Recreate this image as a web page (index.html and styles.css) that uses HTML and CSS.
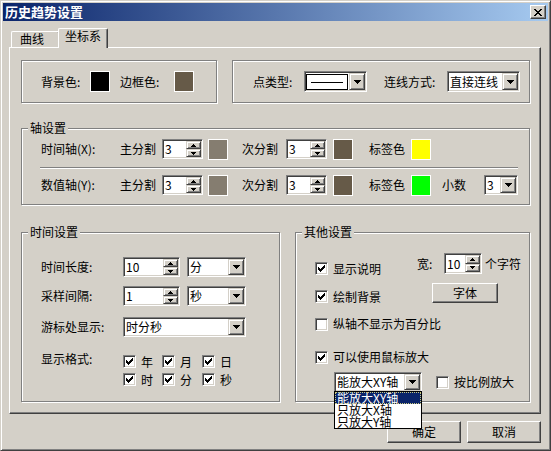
FILE: index.html
```html
<!DOCTYPE html>
<html lang="zh-CN">
<head>
<meta charset="utf-8">
<title>历史趋势设置</title>
<link rel="stylesheet" href="styles.css">
</head>
<body>
<div class="window">
  <div class="titlebar">
    <span class="title">历史趋势设置</span>
    <span class="close-btn"><svg width="8" height="7" viewBox="0 0 8 7" shape-rendering="crispEdges"><path d="M0 0h2v1H0zM6 0h2v1H6zM1 1h2v1H1zM5 1h2v1H5zM2 2h4v1H2zM3 3h2v1H3zM2 4h4v1H2zM1 5h2v1H1zM5 5h2v1H5zM0 6h2v1H0zM6 6h2v1H6z" fill="#000"/></svg></span>
  </div>

  <div class="tabs">
    <div class="tab">曲线</div>
    <div class="tab active">坐标系</div>
  </div>

  <div class="panel">
    <div class="top-row">
      <div class="group g-colors">
        <span class="lbl w49">背景色:</span>
        <span class="swatch sw-black"></span>
        <span class="lbl w54 ml10">边框色:</span>
        <span class="swatch sw-brown"></span>
      </div>
      <div class="group g-line">
        <span class="lbl w51">点类型:</span>
        <div class="combo w63">
          <div class="line-sel"><span class="line"></span></div>
          <span class="drop"><svg width="7" height="4" shape-rendering="crispEdges"><path d="M0 0h7v1H0zM1 1h5v1H1zM2 2h3v1H2zM3 3h1v1H3z"/></svg></span>
        </div>
        <span class="lbl w63 ml17">连线方式:</span>
        <div class="combo w73">
          <span class="val">直接连线</span>
          <span class="drop"><svg width="7" height="4" shape-rendering="crispEdges"><path d="M0 0h7v1H0zM1 1h5v1H1zM2 2h3v1H2zM3 3h1v1H3z"/></svg></span>
        </div>
      </div>
    </div>

    <div class="group g-axis">
      <span class="legend">轴设置</span>
      <div class="arow first">
        <span class="lbl w79">时间轴(X):</span>
        <span class="lbl w42">主分割</span>
        <div class="spin w41"><span class="val">3</span><span class="btns"><span><svg width="5" height="3" shape-rendering="crispEdges"><path d="M2 0h1v1H2zM1 1h3v1H1zM0 2h5v1H0z"/></svg></span><span><svg width="5" height="3" shape-rendering="crispEdges"><path d="M0 0h5v1H0zM1 1h3v1H1zM2 2h1v1H2z"/></svg></span></span></div>
        <span class="swatch sw-gray ml5"></span>
        <span class="lbl w44 ml14">次分割</span>
        <div class="spin w41"><span class="val">3</span><span class="btns"><span><svg width="5" height="3" shape-rendering="crispEdges"><path d="M2 0h1v1H2zM1 1h3v1H1zM0 2h5v1H0z"/></svg></span><span><svg width="5" height="3" shape-rendering="crispEdges"><path d="M0 0h5v1H0zM1 1h3v1H1zM2 2h1v1H2z"/></svg></span></span></div>
        <span class="swatch sw-brown ml6"></span>
        <span class="lbl w42 ml16">标签色</span>
        <span class="swatch sw-yellow"></span>
      </div>
      <div class="separator"></div>
      <div class="arow second">
        <span class="lbl w79">数值轴(Y):</span>
        <span class="lbl w42">主分割</span>
        <div class="spin w41"><span class="val">3</span><span class="btns"><span><svg width="5" height="3" shape-rendering="crispEdges"><path d="M2 0h1v1H2zM1 1h3v1H1zM0 2h5v1H0z"/></svg></span><span><svg width="5" height="3" shape-rendering="crispEdges"><path d="M0 0h5v1H0zM1 1h3v1H1zM2 2h1v1H2z"/></svg></span></span></div>
        <span class="swatch sw-gray ml5"></span>
        <span class="lbl w44 ml14">次分割</span>
        <div class="spin w41"><span class="val">3</span><span class="btns"><span><svg width="5" height="3" shape-rendering="crispEdges"><path d="M2 0h1v1H2zM1 1h3v1H1zM0 2h5v1H0z"/></svg></span><span><svg width="5" height="3" shape-rendering="crispEdges"><path d="M0 0h5v1H0zM1 1h3v1H1zM2 2h1v1H2z"/></svg></span></span></div>
        <span class="swatch sw-brown ml6"></span>
        <span class="lbl w42 ml16">标签色</span>
        <span class="swatch sw-green"></span>
        <span class="lbl w42 ml11">小数</span>
        <div class="combo w34 h20">
          <span class="val">3</span>
          <span class="drop"><svg width="7" height="4" shape-rendering="crispEdges"><path d="M0 0h7v1H0zM1 1h5v1H1zM2 2h3v1H2zM3 3h1v1H3z"/></svg></span>
        </div>
      </div>
    </div>

    <div class="bottom-row">
      <div class="group g-time">
        <span class="legend">时间设置</span>
        <div class="trow r1">
          <span class="lbl w82">时间长度:</span>
          <div class="spin w57"><span class="val">10</span><span class="btns"><span><svg width="5" height="3" shape-rendering="crispEdges"><path d="M2 0h1v1H2zM1 1h3v1H1zM0 2h5v1H0z"/></svg></span><span><svg width="5" height="3" shape-rendering="crispEdges"><path d="M0 0h5v1H0zM1 1h3v1H1zM2 2h1v1H2z"/></svg></span></span></div>
          <div class="combo w59 h20 ml7">
            <span class="val">分</span>
            <span class="drop"><svg width="7" height="4" shape-rendering="crispEdges"><path d="M0 0h7v1H0zM1 1h5v1H1zM2 2h3v1H2zM3 3h1v1H3z"/></svg></span>
          </div>
        </div>
        <div class="trow r2">
          <span class="lbl w82">采样间隔:</span>
          <div class="spin w57"><span class="val">1</span><span class="btns"><span><svg width="5" height="3" shape-rendering="crispEdges"><path d="M2 0h1v1H2zM1 1h3v1H1zM0 2h5v1H0z"/></svg></span><span><svg width="5" height="3" shape-rendering="crispEdges"><path d="M0 0h5v1H0zM1 1h3v1H1zM2 2h1v1H2z"/></svg></span></span></div>
          <div class="combo w59 h20 ml7">
            <span class="val">秒</span>
            <span class="drop"><svg width="7" height="4" shape-rendering="crispEdges"><path d="M0 0h7v1H0zM1 1h5v1H1zM2 2h3v1H2zM3 3h1v1H3z"/></svg></span>
          </div>
        </div>
        <div class="trow r3">
          <span class="lbl w82">游标处显示:</span>
          <div class="combo w123 h20">
            <span class="val">时分秒</span>
            <span class="drop"><svg width="7" height="4" shape-rendering="crispEdges"><path d="M0 0h7v1H0zM1 1h5v1H1zM2 2h3v1H2zM3 3h1v1H3z"/></svg></span>
          </div>
        </div>
        <div class="trow r4">
          <span class="lbl w82 fmt-lbl">显示格式:</span>
          <div class="fmt-grid">
            <label class="check"><span class="cb"><svg width="7" height="7" shape-rendering="crispEdges"><path d="M0 2h1v3H0zM1 3h1v3H1zM2 4h1v3H2zM3 3h1v3H3zM4 2h1v3H4zM5 1h1v3H5zM6 0h1v3H6z"/></svg></span>年</label>
            <label class="check"><span class="cb"><svg width="7" height="7" shape-rendering="crispEdges"><path d="M0 2h1v3H0zM1 3h1v3H1zM2 4h1v3H2zM3 3h1v3H3zM4 2h1v3H4zM5 1h1v3H5zM6 0h1v3H6z"/></svg></span>月</label>
            <label class="check"><span class="cb"><svg width="7" height="7" shape-rendering="crispEdges"><path d="M0 2h1v3H0zM1 3h1v3H1zM2 4h1v3H2zM3 3h1v3H3zM4 2h1v3H4zM5 1h1v3H5zM6 0h1v3H6z"/></svg></span>日</label>
            <label class="check"><span class="cb"><svg width="7" height="7" shape-rendering="crispEdges"><path d="M0 2h1v3H0zM1 3h1v3H1zM2 4h1v3H2zM3 3h1v3H3zM4 2h1v3H4zM5 1h1v3H5zM6 0h1v3H6z"/></svg></span>时</label>
            <label class="check"><span class="cb"><svg width="7" height="7" shape-rendering="crispEdges"><path d="M0 2h1v3H0zM1 3h1v3H1zM2 4h1v3H2zM3 3h1v3H3zM4 2h1v3H4zM5 1h1v3H5zM6 0h1v3H6z"/></svg></span>分</label>
            <label class="check"><span class="cb"><svg width="7" height="7" shape-rendering="crispEdges"><path d="M0 2h1v3H0zM1 3h1v3H1zM2 4h1v3H2zM3 3h1v3H3zM4 2h1v3H4zM5 1h1v3H5zM6 0h1v3H6z"/></svg></span>秒</label>
          </div>
        </div>
      </div>

      <div class="group g-other">
        <span class="legend">其他设置</span>
        <div class="orow o1">
          <label class="check w102 shift5"><span class="cb"><svg width="7" height="7" shape-rendering="crispEdges"><path d="M0 2h1v3H0zM1 3h1v3H1zM2 4h1v3H2zM3 3h1v3H3zM4 2h1v3H4zM5 1h1v3H5zM6 0h1v3H6z"/></svg></span>显示说明</label>
          <span class="lbl w27">宽:</span>
          <div class="spin w38 h21"><span class="val">10</span><span class="btns"><span><svg width="5" height="3" shape-rendering="crispEdges"><path d="M2 0h1v1H2zM1 1h3v1H1zM0 2h5v1H0z"/></svg></span><span><svg width="5" height="3" shape-rendering="crispEdges"><path d="M0 0h5v1H0zM1 1h3v1H1zM2 2h1v1H2z"/></svg></span></span></div>
          <span class="lbl ml3">个字符</span>
        </div>
        <div class="orow o2">
          <label class="check w117 shift3"><span class="cb"><svg width="7" height="7" shape-rendering="crispEdges"><path d="M0 2h1v3H0zM1 3h1v3H1zM2 4h1v3H2zM3 3h1v3H3zM4 2h1v3H4zM5 1h1v3H5zM6 0h1v3H6z"/></svg></span>绘制背景</label>
          <span class="btn font-btn">字体</span>
        </div>
        <div class="orow o3">
          <label class="check"><span class="cb"></span>纵轴不显示为百分比</label>
        </div>
        <div class="orow o4">
          <label class="check"><span class="cb"><svg width="7" height="7" shape-rendering="crispEdges"><path d="M0 2h1v3H0zM1 3h1v3H1zM2 4h1v3H2zM3 3h1v3H3zM4 2h1v3H4zM5 1h1v3H5zM6 0h1v3H6z"/></svg></span>可以使用鼠标放大</label>
        </div>
        <div class="orow o5">
          <div class="combo w88 h20 ml19">
            <span class="val">能放大XY轴</span>
            <span class="drop"><svg width="7" height="4" shape-rendering="crispEdges"><path d="M0 0h7v1H0zM1 1h5v1H1zM2 2h3v1H2zM3 3h1v1H3z"/></svg></span>
          </div>
          <label class="check ml14"><span class="cb"></span>按比例放大</label>
        </div>
      </div>
    </div>
  </div>

  <div class="buttons">
    <span class="btn dlg-btn">确定</span>
    <span class="btn dlg-btn">取消</span>
  </div>

  <div class="dropdown">
    <div class="opt sel">能放大XY轴</div>
    <div class="opt">只放大X轴</div>
    <div class="opt">只放大Y轴</div>
  </div>
</div>
</body>
</html>
```

FILE: styles.css
```css
* { box-sizing: border-box; }
html, body { margin: 0; padding: 0; }
body {
  width: 551px;
  height: 451px;
  overflow: hidden;
  background: #d4d0c8;
  color: #000;
  font-family: "Noto Sans CJK SC", "Liberation Sans", sans-serif;
  font-size: 12px;
  line-height: 14px;
}

.window {
  position: relative;
  width: 551px;
  height: 451px;
  background: #d4d0c8;
  border: 1px solid;
  border-color: #d4d0c8 #404040 #404040 #d4d0c8;
  box-shadow: inset 1px 1px 0 #fff, inset -1px -1px 0 #808080;
  padding: 2px;
  display: flex;
  flex-direction: column;
}

/* title bar */
.titlebar {
  height: 18px;
  flex-shrink: 0;
  background: linear-gradient(to right, #0a246a, #a6caf0);
  display: flex;
  align-items: center;
  justify-content: space-between;
  padding: 0 2px 0 2px;
}
.title {
  color: #fff;
  font-weight: bold;
  font-size: 13px;
  letter-spacing: 0;
}
.close-btn {
  width: 16px;
  height: 14px;
  background: #d4d0c8;
  border: 1px solid;
  border-color: #fff #404040 #404040 #fff;
  box-shadow: inset -1px -1px 0 #808080;
  display: flex;
  align-items: center;
  justify-content: center;
}

/* tabs */
.tabs {
  margin-top: 7px;
  height: 19px;
  flex-shrink: 0;
  display: flex;
  align-items: flex-end;
  padding-left: 8px;
}
.tab {
  height: 16px;
  width: 49px;
  border: 1px solid;
  border-bottom: none;
  border-color: #fff #404040 #fff #fff;
  border-radius: 2px 2px 0 0;
  box-shadow: inset -1px 0 0 #808080;
  padding-left: 8px;
  background: #d4d0c8;
}
.tab.active {
  position: relative;
  z-index: 1;
  width: 50px;
  height: 20px;
  margin-left: -2px;
  margin-bottom: -1px;
  padding-left: 6px;
}

/* panel */
.panel {
  margin-left: 6px;
  width: 532px;
  height: 367px;
  flex-shrink: 0;
  border: 1px solid;
  border-color: #fff #404040 #404040 #fff;
  box-shadow: inset -1px -1px 0 #808080;
  padding: 12px 10px 0 11px;
}

.group {
  position: relative;
  border: 1px solid #808080;
  box-shadow: inset 1px 1px 0 #fff, 1px 1px 0 #fff;
}
.legend {
  position: absolute;
  left: 6px;
  top: -8px;
  padding: 0 2px;
  background: #d4d0c8;
  line-height: 14px;
}

.top-row {
  display: flex;
  gap: 15px;
}
.g-colors {
  width: 196px;
  height: 43px;
  display: flex;
  align-items: center;
  padding-left: 19px;
}
.g-line {
  flex: 1;
  height: 43px;
  display: flex;
  align-items: center;
  padding-left: 20px;
}

.g-axis {
  margin-top: 25px;
  height: 77px;
  padding-left: 19px;
}
.arow {
  display: flex;
  align-items: center;
  height: 20px;
}
.arow.first { margin-top: 10px; }
.arow.second { margin-top: 6px; }
.separator {
  margin-top: 8px;
  margin-left: -1px;
  width: 478px;
  height: 2px;
  border-top: 1px solid #808080;
  border-bottom: 1px solid #fff;
}

.bottom-row {
  margin-top: 27px;
  display: flex;
  gap: 15px;
}
.g-time {
  width: 259px;
  height: 170px;
  padding-left: 19px;
}
.g-other {
  width: 235px;
  height: 170px;
  padding-left: 19px;
}
.trow {
  display: flex;
  align-items: center;
  height: 20px;
}
.trow.r1 { margin-top: 24px; }
.trow.r2 { margin-top: 9px; }
.trow.r3 { margin-top: 11px; }
.trow.r4 { margin-top: 18px; align-items: flex-start; height: auto; }
.fmt-lbl { margin-top: -3px; }
.fmt-grid {
  display: grid;
  grid-template-columns: 39px 40px auto;
  row-gap: 5px;
}
.fmt-grid .check { line-height: 13px; height: 13px; }

.orow {
  display: flex;
  align-items: center;
}
.orow.o1 { margin-top: 20px; height: 21px; }
.orow.o2 { margin-top: 9px; height: 20px; }
.orow.o3 { margin-top: 14px; height: 14px; }
.orow.o4 { margin-top: 19px; height: 14px; }
.orow.o5 { margin-top: 8px; height: 20px; }
.shift5 { margin-top: 10px; }
.shift3 { margin-top: 7px; }

/* generic label widths */
.lbl { white-space: nowrap; flex-shrink: 0; }
.w27 { width: 27px; }
.w34 { width: 34px; }
.w38 { width: 38px; }
.w41 { width: 41px; }
.w42 { width: 42px; }
.w44 { width: 44px; }
.w49 { width: 49px; }
.w51 { width: 51px; }
.w54 { width: 54px; }
.w57 { width: 57px; }
.w59 { width: 59px; }
.w63 { width: 63px; }
.w73 { width: 73px; }
.w79 { width: 79px; }
.w82 { width: 82px; }
.w88 { width: 88px; }
.w102 { width: 102px; }
.w117 { width: 117px; }
.w123 { width: 123px; }
.ml3 { margin-left: 3px; }
.ml5 { margin-left: 5px; }
.ml6 { margin-left: 6px; }
.ml7 { margin-left: 7px; }
.ml10 { margin-left: 10px; }
.ml11 { margin-left: 11px; }
.ml14 { margin-left: 14px; }
.ml16 { margin-left: 16px; }
.ml17 { margin-left: 17px; }
.ml19 { margin-left: 19px; }

/* colour swatches */
.swatch {
  width: 20px;
  height: 21px;
  flex-shrink: 0;
  border: 1px solid #fff;
}
.sw-black { background: #000; }
.sw-brown { background: #665a48; }
.sw-gray { background: #857d70; }
.sw-yellow { background: #ffff00; }
.sw-green { background: #00ff00; }

/* combo box */
.combo {
  display: flex;
  height: 21px;
  flex-shrink: 0;
  padding: 1px;
  background: #fff;
  border: 1px solid;
  border-color: #808080 #fff #fff #808080;
  box-shadow: inset 1px 1px 0 #404040, inset -1px -1px 0 #d4d0c8;
}
.combo.h20 { height: 20px; }
.combo .val {
  flex: 1;
  padding-left: 1px;
  display: flex;
  align-items: center;
  white-space: nowrap;
  overflow: hidden;
}
.combo .drop {
  width: 16px;
  flex-shrink: 0;
  background: #d4d0c8;
  border: 1px solid;
  border-color: #d4d0c8 #404040 #404040 #d4d0c8;
  box-shadow: inset 1px 1px 0 #fff, inset -1px -1px 0 #808080;
  display: flex;
  align-items: center;
  justify-content: center;
}
.line-sel {
  flex: 1;
  margin: 1px 1px 0 0;
  height: 16px;
  border: 1px solid #000;
  display: flex;
  align-items: center;
  padding: 0 4px;
}
.line-sel .line {
  flex: 1;
  height: 1px;
  background: #000;
}

/* spin box */
.spin {
  display: flex;
  height: 20px;
  flex-shrink: 0;
  padding: 1px;
  background: #fff;
  border: 1px solid;
  border-color: #808080 #fff #fff #808080;
  box-shadow: inset 1px 1px 0 #404040, inset -1px -1px 0 #d4d0c8;
}
.spin.h21 { height: 21px; }
.spin .val {
  flex: 1;
  padding-left: 1px;
  display: flex;
  align-items: center;
}
.spin .btns {
  width: 15px;
  display: flex;
  flex-direction: column;
}
.spin .btns span {
  flex: 1;
  background: #d4d0c8;
  border: 1px solid;
  border-color: #d4d0c8 #404040 #404040 #d4d0c8;
  box-shadow: inset 1px 1px 0 #fff, inset -1px -1px 0 #808080;
  display: flex;
  align-items: center;
  justify-content: center;
}

/* checkbox */
.check {
  display: flex;
  align-items: center;
  gap: 5px;
  white-space: nowrap;
  flex-shrink: 0;
}
.cb {
  width: 13px;
  height: 13px;
  flex-shrink: 0;
  background: #fff;
  border: 1px solid;
  border-color: #808080 #fff #fff #808080;
  box-shadow: inset 1px 1px 0 #404040, inset -1px -1px 0 #d4d0c8;
  display: flex;
  align-items: center;
  justify-content: center;
}

/* push buttons */
.btn {
  display: flex;
  align-items: center;
  justify-content: center;
  background: #d4d0c8;
  border: 1px solid;
  border-color: #fff #404040 #404040 #fff;
  box-shadow: inset -1px -1px 0 #808080;
  flex-shrink: 0;
}
.font-btn { width: 66px; height: 20px; }
.dlg-btn { width: 74px; height: 22px; }

.buttons {
  margin-top: 7px;
  display: flex;
  justify-content: flex-end;
  gap: 6px;
  padding-right: 7px;
}

/* open drop-down list */
.dropdown {
  position: absolute;
  left: 333px;
  top: 390px;
  width: 88px;
  height: 38px;
  background: #fff;
  border: 1px solid #000;
  z-index: 5;
}
.dropdown .opt {
  height: 12px;
  line-height: 12px;
  padding-left: 2px;
  white-space: nowrap;
}
.dropdown .opt.sel {
  background: #0a246a;
  color: #fff;
  outline: 1px dotted #c8c880;
  outline-offset: -1px;
}
```
